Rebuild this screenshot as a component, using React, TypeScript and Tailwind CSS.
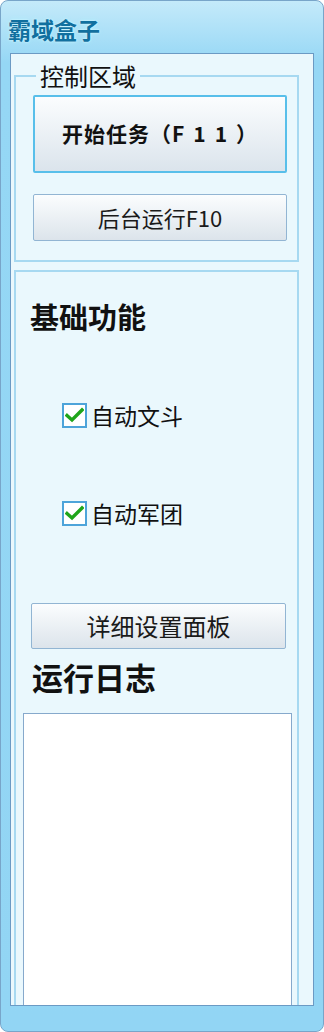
import React from "react";

const font = { fontFamily: '"Noto Sans CJK SC", "Noto Sans", sans-serif' };

function CheckRow({ label }: { label: string }) {
  return (
    <label className="flex items-center h-[26px] gap-[4px] text-[23px] leading-[26px] text-[#111]">
      <span className="w-[25px] h-[25px] border-2 border-[#4da4da] bg-white flex items-center justify-center">
        <svg width="19" height="16" viewBox="0 0 19 16">
          <path d="M2 8.5 L7 13 L17 3" fill="none" stroke="#1fa51a" strokeWidth="3.4" strokeLinecap="square" />
        </svg>
      </span>
      {label}
    </label>
  );
}

export default function App() {
  return (
    <div
      className="w-[324px] h-[1032px] rounded-[8px] border border-[#78a5c9] bg-gradient-to-b from-[#c4eafa] via-[#95d7f5] via-[6%] to-[#92d5f4] flex flex-col overflow-hidden"
      style={font}
    >
      {/* Title */}
      <div className="h-[52px] shrink-0 pl-[7px] pt-[13px]">
        <span className="text-[23px] font-bold leading-[30px] text-[#11709f] [text-shadow:0_0_2px_#e6fbff,0_0_4px_#a8eeff]">
          霸域盒子
        </span>
      </div>

      {/* Client area */}
      <div className="ml-[9px] mr-[9px] mb-[25px] flex-1 border border-[#6b9ac4] bg-[#eaf8fd] flex flex-col overflow-hidden min-h-0">
        {/* Control group */}
        <fieldset className="ml-[3px] mr-[14px] mt-[10px] border-2 border-[#a7d9f1] px-0 pb-[19px]">
          <legend className="ml-[20px] px-[4px] text-[24px] leading-[24px] text-[#111]">控制区域</legend>
          <div className="flex flex-col mt-[7px] ml-[17px] mr-[10px]">
            <button className="h-[78px] rounded-[2px] border-2 border-[#58bfea] bg-gradient-to-b from-[#fbfdfe] to-[#dbe4ec] text-[21px] font-bold text-[#111] tracking-[1px]">
              开始任务（<span className="tracking-[9px]">F11</span>）
            </button>
            <button className="h-[47px] mt-[21px] rounded-[2px] border border-[#92b5d3] bg-gradient-to-b from-[#fbfdfe] to-[#dce4eb] text-[22px] text-[#1a1a1a]">
              后台运行F10
            </button>
          </div>
        </fieldset>

        {/* Function panel */}
        <div className="ml-[3px] mr-[14px] mt-[8px] flex-1 min-h-0 border-2 border-b-0 border-[#a7d9f1] flex flex-col">
          <div className="ml-[14px] mt-[28px] text-[29px] font-bold leading-[32px] text-[#111]">基础功能</div>
          <div className="ml-[46px] mt-[70px]">
            <CheckRow label="自动文斗" />
          </div>
          <div className="ml-[46px] mt-[72px]">
            <CheckRow label="自动军团" />
          </div>
          <button className="ml-[15px] w-[255px] h-[46px] mt-[77px] rounded-[2px] border border-[#92b5d3] bg-gradient-to-b from-[#fbfdfe] to-[#dce4eb] text-[24px] text-[#1a1a1a]">
            详细设置面板
          </button>
          <div className="ml-[16px] mt-[12px] text-[31px] font-bold leading-[32px] text-[#111]">运行日志</div>
          <div className="ml-[7px] mr-[5px] mt-[20px] flex-1 border border-b-0 border-[#86a9cc] bg-white" />
        </div>
      </div>
    </div>
  );
}
